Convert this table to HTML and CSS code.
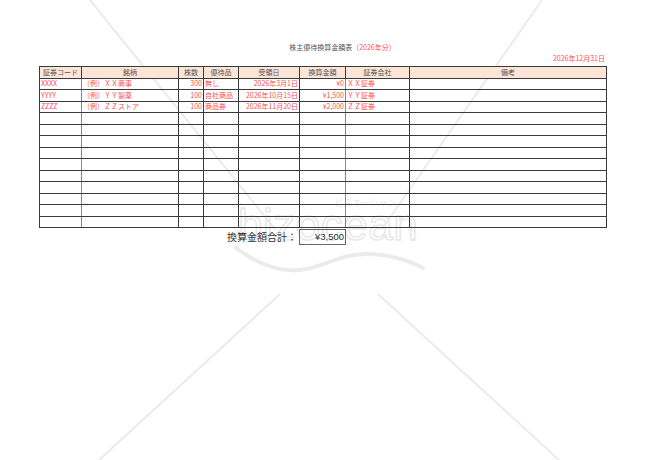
FILE: index.html
```html
<!DOCTYPE html>
<html lang="ja">
<head>
<meta charset="utf-8">
<title>株主優待換算金額表</title>
<link rel="stylesheet" href="styles.css">
</head>
<body>
<svg class="watermark" width="650" height="460" viewBox="0 0 650 460" aria-hidden="true">
  <g stroke="#ebebeb" stroke-width="2" fill="none" stroke-linecap="round">
    <line x1="90" y1="0" x2="275" y2="229"/>
    <line x1="542" y1="0" x2="382" y2="229"/>
    <line x1="279" y1="295" x2="99" y2="460"/>
    <line x1="379" y1="295" x2="559" y2="460"/>
    <path d="M236 248 C255 262 278 272 300 270 C322 268 340 254 365 254 C390 254 408 260 423 268" stroke-width="4"/>
  </g>
  <text x="238" y="240" class="wm-text">bizocean</text>
  <text x="334" y="206" class="wm-kana">ビズオーシャン</text>
</svg>
<div class="sheet">
  <div class="title">株主優待換算金額表<span class="red">（2026年分）</span></div>
  <div class="date">2026年12月31日</div>
  <table class="grid">
    <colgroup>
      <col class="c1"><col class="c2"><col class="c3"><col class="c4"><col class="c5"><col class="c6"><col class="c7"><col class="c8">
    </colgroup>
    <thead>
      <tr>
        <th>証券コード</th><th>銘柄</th><th>株数</th><th>優待品</th><th>受領日</th><th>換算金額</th><th>証券会社</th><th>備考</th>
      </tr>
    </thead>
    <tbody>
      <tr class="data">
        <td>XXXX</td><td>（例）ＸＸ商事</td><td class="r">300</td><td>無し</td><td class="r">2026年3月1日</td><td class="r">¥0</td><td>ＸＸ証券</td><td></td>
      </tr>
      <tr class="data">
        <td>YYYY</td><td>（例）ＹＹ製薬</td><td class="r">100</td><td>自社商品</td><td class="r">2026年10月15日</td><td class="r">¥1,500</td><td>ＹＹ証券</td><td></td>
      </tr>
      <tr class="data">
        <td>ZZZZ</td><td>（例）ＺＺストア</td><td class="r">100</td><td>商品券</td><td class="r">2026年11月20日</td><td class="r">¥2,000</td><td>ＺＺ証券</td><td></td>
      </tr>
      <tr><td></td><td></td><td></td><td></td><td></td><td></td><td></td><td></td></tr>
      <tr><td></td><td></td><td></td><td></td><td></td><td></td><td></td><td></td></tr>
      <tr><td></td><td></td><td></td><td></td><td></td><td></td><td></td><td></td></tr>
      <tr><td></td><td></td><td></td><td></td><td></td><td></td><td></td><td></td></tr>
      <tr><td></td><td></td><td></td><td></td><td></td><td></td><td></td><td></td></tr>
      <tr><td></td><td></td><td></td><td></td><td></td><td></td><td></td><td></td></tr>
      <tr><td></td><td></td><td></td><td></td><td></td><td></td><td></td><td></td></tr>
      <tr><td></td><td></td><td></td><td></td><td></td><td></td><td></td><td></td></tr>
      <tr><td></td><td></td><td></td><td></td><td></td><td></td><td></td><td></td></tr>
      <tr><td></td><td></td><td></td><td></td><td></td><td></td><td></td><td></td></tr>
    </tbody>
  </table>
  <div class="total">
    <div class="total-label">換算金額合計：</div>
    <div class="total-box">¥3,500</div>
  </div>
</div>
</body>
</html>
```
FILE: styles.css
```css
html, body {
  margin: 0;
  padding: 0;
  background: #ffffff;
}
body {
  width: 650px;
  height: 460px;
  position: relative;
  overflow: hidden;
  font-family: "Noto Sans CJK JP", "Noto Sans", sans-serif;
  color: #444;
}
.watermark {
  position: absolute;
  left: 0;
  top: 0;
  pointer-events: none;
}
.wm-text {
  font-family: "Liberation Sans", sans-serif;
  font-size: 44px;
  fill: none;
  stroke: #e9e9e9;
  stroke-width: 1.6;
  letter-spacing: 0.5px;
}
.wm-kana {
  font-size: 9px;
  fill: #ececec;
}
.sheet {
  position: relative;
  margin-left: 39px;
  width: 567px;
  padding-top: 42px;
}
.title {
  font-size: 7px;
  line-height: 10px;
  height: 12px;
  text-align: center;
  padding-left: 40px;
  color: #555;
}
.red {
  color: #ff4f4f;
}
.date {
  font-size: 7px;
  line-height: 9px;
  text-align: right;
  padding-right: 1px;
  color: #ff4f4f;
  margin-bottom: 3px;
}
.grid {
  border-collapse: collapse;
  table-layout: fixed;
  width: 567px;
  font-size: 7px;
}
.c1 { width: 42px; }
.c2 { width: 97px; }
.c3 { width: 25px; }
.c4 { width: 35px; }
.c5 { width: 61px; }
.c6 { width: 46px; }
.c7 { width: 64px; }
.c8 { width: 197px; }
.grid tr {
  height: 11.5px;
}
.grid th, .grid td {
  border: 1px solid #3a3a3a;
  padding: 0 1px;
  line-height: 9px;
  height: 9.5px;
  white-space: nowrap;
  overflow: hidden;
}
.grid th {
  background: #fce4d6;
  font-weight: normal;
  color: #555;
  text-align: center;
}
.grid td:first-child {
  border-right-color: #8a8a8a;
}
.grid td:nth-child(6) {
  border-right-color: #8a8a8a;
}
.grid .data td {
  color: #ff4f4f;
}
.grid td.r {
  text-align: right;
}
.total {
  display: flex;
  align-items: flex-start;
  padding-top: 1px;
}
.total-label {
  width: 258px;
  padding-right: 2px;
  text-align: right;
  font-size: 10px;
  line-height: 15px;
  color: #333;
}
.total-box {
  width: 44px;
  height: 14px;
  border: 1px solid #666;
  font-family: "Liberation Sans", sans-serif;
  font-size: 9.5px;
  line-height: 14px;
  text-align: right;
  padding-right: 1px;
  box-sizing: content-box;
  color: #333;
}
```
